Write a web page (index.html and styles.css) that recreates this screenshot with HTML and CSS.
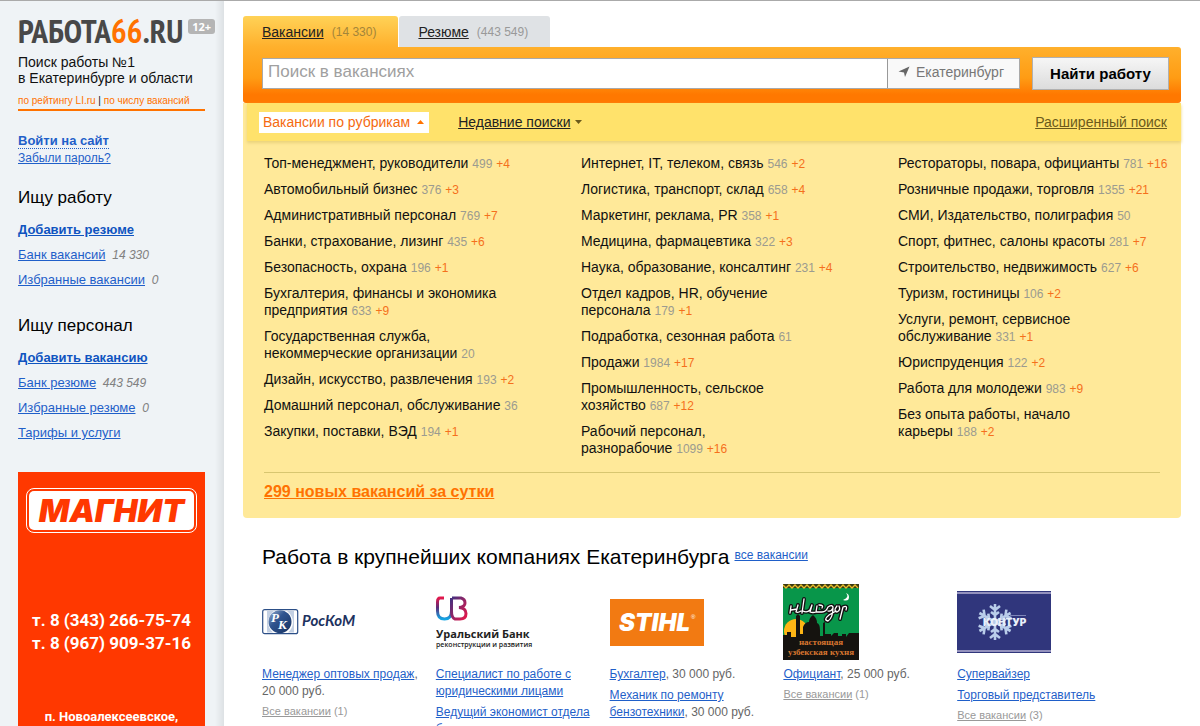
FILE: index.html
```html
<!DOCTYPE html>
<html lang="ru">
<head>
<meta charset="utf-8">
<title>Работа66.ru</title>
<link rel="stylesheet" href="styles.css">
</head>
<body>
<div class="page">
  <aside class="sidebar">
    <div class="brand"><span class="logo">РАБОТА<span class="logo-num">66</span>.RU</span><span class="age">12+</span></div>
    <p class="slogan">Поиск работы №1<br>в Екатеринбурге и области</p>
    <p class="rating"><a href="#">по рейтингу LI.ru</a> | <a href="#">по числу вакансий</a></p>
    <div class="auth"><a class="login" href="#">Войти на сайт</a><a class="forgot" href="#">Забыли пароль?</a></div>
    <nav class="menu">
      <h2>Ищу работу</h2>
      <ul>
        <li><a class="strong" href="#">Добавить резюме</a></li>
        <li><a href="#">Банк вакансий</a> <i>14 330</i></li>
        <li><a href="#">Избранные вакансии</a> <i>0</i></li>
      </ul>
      <h2>Ищу персонал</h2>
      <ul>
        <li><a class="strong" href="#">Добавить вакансию</a></li>
        <li><a href="#">Банк резюме</a> <i>443 549</i></li>
        <li><a href="#">Избранные резюме</a> <i>0</i></li>
        <li><a href="#">Тарифы и услуги</a></li>
      </ul>
    </nav>
    <div class="banner">
      <div class="magnit"><div class="magnit-in">МАГНИТ</div></div>
      <p class="phones">т. 8 (343) 266-75-74<br>т. 8 (967) 909-37-16</p>
      <p class="address">п. Новоалексеевское,</p>
    </div>
  </aside>

  <main class="main">
    <div class="tabs">
      <div class="tab active"><a href="#">Вакансии</a><span>(14 330)</span></div>
      <div class="tab"><a href="#">Резюме</a><span>(443 549)</span></div>
    </div>
    <form class="search">
      <div class="field">
        <input class="query" type="text" placeholder="Поиск в вакансиях" aria-label="Поиск в вакансиях">
        <button class="city" type="button"><svg width="12" height="12" viewBox="0 0 12 12"><path d="M11.500 .5 7 11 6 6.500 .5 5.500Z" fill="#666"/></svg>Екатеринбург</button>
      </div>
      <button class="find" type="submit">Найти работу</button>
    </form>
    <section class="panel">
      <div class="filters">
        <button class="rubrics" type="button">Вакансии по рубрикам<svg width="7" height="4" viewBox="0 0 7 4"><path d="M0 4 3.500 0 7 4Z" fill="#ff7200"/></svg></button>
        <button class="recent" type="button"><u>Недавние поиски</u><svg width="7" height="4" viewBox="0 0 7 4"><path d="M0 0H7L3.500 4Z" fill="#6b5a1c"/></svg></button>
        <a class="advanced" href="#">Расширенный поиск</a>
      </div>
      <div class="rubric-list">
        <ul>
          <li>Топ-менеджмент, руководители <small>499</small> <b>+4</b></li>
          <li>Автомобильный бизнес <small>376</small> <b>+3</b></li>
          <li>Административный персонал <small>769</small> <b>+7</b></li>
          <li>Банки, страхование, лизинг <small>435</small> <b>+6</b></li>
          <li>Безопасность, охрана <small>196</small> <b>+1</b></li>
          <li>Бухгалтерия, финансы и экономика<br>предприятия <small>633</small> <b>+9</b></li>
          <li>Государственная служба,<br>некоммерческие организации <small>20</small></li>
          <li>Дизайн, искусство, развлечения <small>193</small> <b>+2</b></li>
          <li>Домашний персонал, обслуживание <small>36</small></li>
          <li>Закупки, поставки, ВЭД <small>194</small> <b>+1</b></li>
        </ul>
        <ul>
          <li>Интернет, IT, телеком, связь <small>546</small> <b>+2</b></li>
          <li>Логистика, транспорт, склад <small>658</small> <b>+4</b></li>
          <li>Маркетинг, реклама, PR <small>358</small> <b>+1</b></li>
          <li>Медицина, фармацевтика <small>322</small> <b>+3</b></li>
          <li>Наука, образование, консалтинг <small>231</small> <b>+4</b></li>
          <li>Отдел кадров, HR, обучение<br>персонала <small>179</small> <b>+1</b></li>
          <li>Подработка, сезонная работа <small>61</small></li>
          <li>Продажи <small>1984</small> <b>+17</b></li>
          <li>Промышленность, сельское<br>хозяйство <small>687</small> <b>+12</b></li>
          <li>Рабочий персонал,<br>разнорабочие <small>1099</small> <b>+16</b></li>
        </ul>
        <ul>
          <li>Рестораторы, повара, официанты <small>781</small> <b>+16</b></li>
          <li>Розничные продажи, торговля <small>1355</small> <b>+21</b></li>
          <li>СМИ, Издательство, полиграфия <small>50</small></li>
          <li>Спорт, фитнес, салоны красоты <small>281</small> <b>+7</b></li>
          <li>Строительство, недвижимость <small>627</small> <b>+6</b></li>
          <li>Туризм, гостиницы <small>106</small> <b>+2</b></li>
          <li>Услуги, ремонт, сервисное<br>обслуживание <small>331</small> <b>+1</b></li>
          <li>Юриспруденция <small>122</small> <b>+2</b></li>
          <li>Работа для молодежи <small>983</small> <b>+9</b></li>
          <li>Без опыта работы, начало<br>карьеры <small>188</small> <b>+2</b></li>
        </ul>
      </div>
      <div class="fresh"><a href="#">299 новых вакансий за сутки</a></div>
    </section>

    <section class="companies">
      <header><h1>Работа в крупнейших компаниях Екатеринбурга</h1><a href="#">все вакансии</a></header>
      <div class="cards">
        <article>
          <div class="pic"><svg width="98" height="28" viewBox="0 0 98 28">
            <defs><linearGradient id="rk" x1="0" y1="0" x2="1" y2="1"><stop offset="0" stop-color="#9fb4d2"/><stop offset=".4" stop-color="#2f5590"/><stop offset="1" stop-color="#16305f"/></linearGradient></defs>
            <rect x=".7" y="1.700" width="35" height="24" rx="2" fill="#fff" stroke="#2c4f87" stroke-width="1.200"/>
            <path d="M5 3H12Q6 8 6 14Q6 20 11 24.500H5ZM32 3H25Q31 8 31 14Q31 20 26 24.500H32Z" fill="#c3d0e3"/>
            <circle cx="18" cy="13.700" r="11.500" fill="url(#rk)"/>
            <text x="9" y="14" class="rk-mono">Р</text><text x="16" y="21" class="rk-mono">К</text>
            <text x="40" y="18" class="rk-name">РосКоМ</text></svg></div>
          <p><a href="#">Менеджер оптовых продаж</a>, 20 000 руб.</p>
          <p class="all"><a href="#">Все вакансии</a> (1)</p>
        </article>
        <article>
          <div class="pic"><svg width="108" height="54" viewBox="0 0 108 54">
            <defs><linearGradient id="ubl" x1="0" y1="0" x2="0" y2="1"><stop offset="0" stop-color="#e2184c"/><stop offset=".45" stop-color="#5b2c78"/><stop offset="1" stop-color="#13a5e4"/></linearGradient>
            <linearGradient id="ubr" x1="0" y1="0" x2="1" y2="1"><stop offset="0" stop-color="#44317f"/><stop offset="1" stop-color="#e6184a"/></linearGradient></defs>
            <path d="M8 3H4Q1.500 3 1.500 7V16Q1.500 24 8.500 24Q15.500 24 15.500 16V3" fill="none" stroke="url(#ubl)" stroke-width="3"/>
            <path d="M16 3H25Q29 4 29 8Q29 12 23 12.500Q30 13 30 18.500Q30 24 24 24H19Q15.500 23 15.500 16V3" fill="none" stroke="url(#ubr)" stroke-width="3"/>
            <text x="0" y="43" class="ub-name">Уральский Банк</text><text x="0" y="52" class="ub-sub">реконструкции и развития</text></svg></div>
          <p><a href="#">Специалист по работе с юридическими лицами</a></p>
          <p><a href="#">Ведущий экономист отдела<br>б</a></p>
        </article>
        <article>
          <div class="pic"><svg width="94" height="47" viewBox="0 0 94 47"><rect width="94" height="47" fill="#f27a12"/><text x="9" y="32" class="stihl">STIHL</text><text x="81" y="20" class="reg">®</text></svg></div>
          <p><a href="#">Бухгалтер</a>, 30 000 руб.</p>
          <p><a href="#">Механик по ремонту<br>бензотехники</a>, 30 000 руб.</p>
        </article>
        <article>
          <div class="pic"><svg width="76" height="76" viewBox="0 0 76 76">
            <rect width="76" height="76" fill="#08964a"/><rect width="76" height="4" fill="#3c3a12"/>
            <path d="M0 1 3 4 6 1 9 4 12 1 15 4 18 1 21 4 24 1 27 4 30 1 33 4 36 1 39 4 42 1 45 4 48 1 51 4 54 1 57 4 60 1 63 4 66 1 69 4 72 1 75 4" fill="none" stroke="#e8bd2c" stroke-width="1.300"/>
            <circle cx="13" cy="47" r="12" fill="#fdb515"/>
            <path d="M0 51H4V48H8V53H13V32L15 30 17 32V50H20V43Q22 38 26 38Q26 34 30 31Q34 34 34 39Q37 40 37 46V52H40V39L42 38V50H48V52L51 49H55V52H59V50H63V53L66 49H76V76H0Z" fill="#15130f"/>
            <path d="M63 9Q67 13 60 16Q66 18 66 13Q66 10 63 9Z" fill="#fff"/>
            <g fill="none" stroke-linecap="round" stroke-linejoin="round">
              <path d="M8 22 7 29M8 26 14 25M15 21 13 28Q15 29 18 27M21 15 19 29M20 27Q24 29 27 26L29 21 27 28Q30 29 33 28M34 22 33 28H39M36 21Q41 21 39 24M39 28Q43 28 45 23Q50 20 50 24Q48 28 45 27M50 23Q50 34 45 37Q40 36 46 31L53 27M54 22Q50 27 54 28Q58 26 56 22M57 35 60 23Q65 21 63 26 61 28H65Q63 24 67 22M67 22 67 28H71M71 25H72" stroke="#111" stroke-width="4"/>
              <path d="M8 22 7 29M8 26 14 25M15 21 13 28Q15 29 18 27M21 15 19 29M20 27Q24 29 27 26L29 21 27 28Q30 29 33 28M34 22 33 28H39M36 21Q41 21 39 24M39 28Q43 28 45 23Q50 20 50 24Q48 28 45 27M50 23Q50 34 45 37Q40 36 46 31L53 27M54 22Q50 27 54 28Q58 26 56 22M57 35 60 23Q65 21 63 26 61 28H65Q63 24 67 22M67 22 67 28H71M71 25H72" stroke="#fff" stroke-width="1.300"/>
            </g>
            <text x="38" y="61" class="uz">настоящая</text><text x="38" y="71" class="uz">узбекская кухня</text></svg></div>
          <p><a href="#">Официант</a>, 25 000 руб.</p>
          <p class="all"><a href="#">Все вакансии</a> (1)</p>
        </article>
        <article>
          <div class="pic"><svg width="94" height="62" viewBox="0 0 94 62">
            <rect width="94" height="62" fill="#30367c"/><path d="M0 2H94M0 60H94" stroke="#9391bd" stroke-width="2"/>
            <g stroke="#b9cdea" stroke-width="2.600" fill="none"><path id="ray" d="M38 31V13M38 19 33 15M38 19 43 15M38 24 34 21M38 24 42 21"/><use href="#ray" transform="rotate(60 38 31)"/><use href="#ray" transform="rotate(120 38 31)"/><use href="#ray" transform="rotate(180 38 31)"/><use href="#ray" transform="rotate(240 38 31)"/><use href="#ray" transform="rotate(300 38 31)"/></g>
            <path d="M53 24.500H69" stroke="#7f86b8"/><text x="26" y="35" class="kontur">КОНТУР</text></svg></div>
          <p><a href="#">Супервайзер</a></p>
          <p><a href="#">Торговый представитель</a></p>
          <p class="all"><a href="#">Все вакансии</a> (3)</p>
        </article>
      </div>
    </section>
  </main>
</div>
</body>
</html>
```
FILE: styles.css
```css
* { box-sizing: border-box; }
body { margin: 0; background: #fff; color: #111; font-family: "Liberation Sans", Arial, sans-serif; font-size: 14px; }
p, h1, h2, ul { margin: 0; padding: 0; font-weight: normal; }
ul { list-style: none; }
button { font-family: inherit; cursor: pointer; padding: 0; border: 0; background: none; }
a { color: #1f5fc9; }
svg { display: block; }
.page { display: flex; height: 100vh; overflow: hidden; border-top: 1px solid #aaa; }

.sidebar { flex: 0 0 224px; min-width: 0; padding: 12px 19px 0 18px; background: linear-gradient(to left, #dde1e4, #eff3f6 9px); }
.brand { display: flex; align-items: flex-start; gap: 5px; height: 40px; white-space: nowrap; }
.logo { font: bold 33px/36px "PT Sans Narrow", "Liberation Sans Narrow", "Roboto Condensed", "DejaVu Sans Condensed", sans-serif; color: #484848; }
.logo-num { color: #ff7200; }
.age { margin-top: 6px; padding: 0 4px; border-radius: 3px; background: #b5b5b5; color: #fff; font: bold 11px/15px "Open Sans", sans-serif; }
.slogan { line-height: 16px; white-space: nowrap; padding-top: 1px; }
.rating { margin-top: 8px; padding-bottom: 1px; border-bottom: 2px solid #ff7200; font-size: 10px; line-height: 14px; white-space: nowrap; }
.rating a { color: #ff7200; text-decoration: none; }
.auth { display: flex; flex-direction: column; align-items: flex-start; gap: 2px; margin-top: 22px; }
.login { font-weight: bold; font-size: 13px; line-height: 15px; text-decoration: none; border-bottom: 1px dotted #1f5fc9; }
.forgot { font-size: 12px; line-height: 15px; }
.menu h2 { margin-top: 22px; font-size: 17px; line-height: 20px; color: #000; }
.menu ul { display: grid; gap: 9px; margin-top: 14px; font-size: 13px; line-height: 16px; white-space: nowrap; }
.menu ul + h2 { margin-top: 28px; }
.menu .strong { font-weight: bold; color: #0f54c0; }
.menu i { margin-left: 3px; font-size: 12px; color: #808080; }
.banner { margin-top: 31px; padding: 16px 8px 20px; background: #ff3800; color: #fff; text-align: center; font-family: Roboto, sans-serif; }
.banner p { font-weight: bold; white-space: nowrap; }
.magnit { padding: 2px; border: 1px solid #fff; border-radius: 8px; }
.magnit-in { border-radius: 5px; background: #fff; color: #ff3800; font: italic 900 32px/39px Inter, sans-serif; }
.phones { margin-top: 76px; font-size: 17px; line-height: 23px; }
.address { margin-top: 54px; font-size: 13px; line-height: 16px; }

.main { flex: 1; min-width: 0; padding: 15px 19px 0; }
.tabs { display: flex; gap: 1px; }
.tab { display: flex; align-items: center; gap: 8px; height: 31px; padding: 0 22px 0 19px; border-radius: 3px 3px 0 0; background: #dfe2e5; white-space: nowrap; }
.tab.active { background: linear-gradient(#ffd257, #ffb02c); }
.tab a { color: #222; }
.tab span { font-size: 12px; color: #999; }
.tab.active span { color: #a3853a; }
.search { display: flex; align-items: center; gap: 12px; height: 56px; padding: 0 12px 4px 19px; border-radius: 0 3px 3px 3px; background: linear-gradient(#ffb02c, #ff9c14 55%, #ff7800 85%); }
.field { flex: 1; display: flex; height: 31px; border: 1px solid #a9a9a9; background: #fff; }
.query { flex: 1; min-width: 0; padding: 0 5px 2px; border: 0; outline: 0; background: none; font: 17px "Liberation Sans", Arial, sans-serif; }
.query::placeholder { color: #a0a0a0; opacity: 1; }
.city { display: flex; align-items: center; gap: 6px; padding: 0 15px 2px 10px; border-left: 1px solid #999; background: #f9f9f9; color: #777; font-size: 14px; }
.find { width: 137px; height: 33px; border: 1px solid #b0b0b0; background: linear-gradient(#f6f6f6, #dcdcdc); color: #000; font-size: 15px; font-weight: bold; }

.panel { border-radius: 0 0 4px 4px; background: #ffe999; }
.filters { display: flex; align-items: center; height: 38px; margin-left: 4px; padding: 0 14px 0 12px; background: #ffe26b; box-shadow: 0 2px 3px #ead27c; }
.filters button { display: flex; align-items: center; gap: 7px; font-size: 14px; white-space: nowrap; }
.filters .rubrics { height: 21px; padding: 0 5px 0 4px; background: #fff; color: #f56a10; }
.filters .recent { gap: 5px; margin-left: 29px; color: #222; }
.advanced { margin-left: auto; color: #6b5a1c; }
.rubric-list { display: grid; grid-template-columns: repeat(3, 1fr); gap: 45px; margin: 0 11px 0 21px; padding: 14px 0 15px; white-space: nowrap; }
.rubric-list ul { display: flex; flex-direction: column; gap: 9px; line-height: 17px; }
.rubric-list small { font-size: 12px; line-height: 12px; color: #9b9b90; }
.rubric-list b { font-size: 12px; line-height: 12px; font-weight: normal; color: #f5701c; }
.fresh { margin: 0 21px; padding: 9px 0 17px; border-top: 1px solid #d8c670; }
.fresh a { color: #ff7200; font-weight: bold; font-size: 16px; line-height: 19px; }

.companies { padding: 26px 50px 0 19px; }
.companies header { display: flex; align-items: center; gap: 5px; font-size: 12px; line-height: 22px; white-space: nowrap; }
.companies header a { padding-bottom: 4px; }
.companies h1 { font-size: 21px; line-height: 26px; color: #000; }
.cards { display: grid; grid-template-columns: repeat(5, 1fr); margin-top: 13px; color: #666; font-size: 12px; line-height: 17px; }
.cards article { display: flex; flex-direction: column; gap: 4px; padding-right: 14px; }
.pic { display: flex; align-items: center; height: 78px; margin-bottom: 1px; }
.all { font-size: 11px; line-height: 15px; color: #999; }
.all a { color: #999; }

.rk-mono { font: italic bold 13px "Liberation Serif", serif; fill: #fff; }
.rk-name { font: italic bold 15px Lato, sans-serif; fill: #1d3260; }
.ub-name { font: bold 11px "Open Sans", sans-serif; fill: #222; }
.ub-sub { font: 600 7px "Open Sans", sans-serif; fill: #222; }
.stihl { font: italic 900 24px Inter, sans-serif; fill: #fff; }
.reg { font: 6px "Liberation Sans", sans-serif; fill: #fff; }
.uz { font: bold 9px "Liberation Serif", serif; fill: #d8762f; text-anchor: middle; }
.kontur { font: 900 10px Inter, sans-serif; fill: #e9f0fa; }
```
